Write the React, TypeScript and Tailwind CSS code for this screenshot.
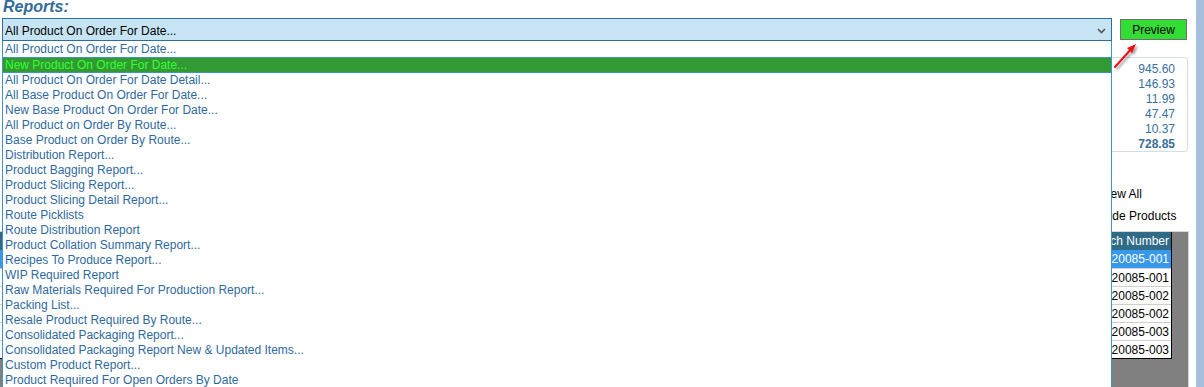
import React from 'react'

const reports = [
  'All Product On Order For Date...',
  'New Product On Order For Date...',
  'All Product On Order For Date Detail...',
  'All Base Product On Order For Date...',
  'New Base Product On Order For Date...',
  'All Product on Order By Route...',
  'Base Product on Order By Route...',
  'Distribution Report...',
  'Product Bagging Report...',
  'Product Slicing Report...',
  'Product Slicing Detail Report...',
  'Route Picklists',
  'Route Distribution Report',
  'Product Collation Summary Report...',
  'Recipes To Produce Report...',
  'WIP Required Report',
  'Raw Materials Required For Production Report...',
  'Packing List...',
  'Resale Product Required By Route...',
  'Consolidated Packaging Report...',
  'Consolidated Packaging Report New & Updated Items...',
  'Custom Product Report...',
  'Product Required For Open Orders By Date',
]

const totals = ['945.60', '146.93', '11.99', '47.47', '10.37']

const batches = ['20220085-001', '20220085-001', '20220085-002', '20220085-002', '20220085-003', '20220085-003']

function Chevron() {
  return (
    <svg width="9" height="6" viewBox="0 0 9 6" className="mr-[5px]">
      <path d="M1 1 L4.5 4.5 L8 1" fill="none" stroke="#555" strokeWidth="1.6" />
    </svg>
  )
}

function RedArrow() {
  return (
    <svg
      width="34"
      height="34"
      viewBox="0 0 34 34"
      className="absolute left-[1108px] top-[40px] drop-shadow-[2px_2px_1px_rgba(0,0,0,0.35)]"
    >
      <path d="M7 27 L24 8" stroke="#ee1111" strokeWidth="2" fill="none" strokeLinecap="round" />
      <path d="M28 4 L19 8 L24 13 Z" fill="#ee1111" />
    </svg>
  )
}

export default function App() {
  return (
    <div className="flex h-[387px] w-[1204px] overflow-hidden bg-white font-['Liberation_Sans',Arial,sans-serif] text-[12px]">
      <div className="relative w-[1196px]">
        {/* header */}
        <div className="h-[18px] pl-[3px] text-[16px] font-bold italic leading-[14px] text-[#336b99]">
          Reports:
        </div>
        <div className="flex h-[23px] items-start pl-[2px]">
          <div className="flex h-[23px] w-[1110px] items-center justify-between border border-[#2d6d9c] bg-[#c6e4f4] pl-[2px] pt-[2px] text-black">
            <span>All Product On Order For Date...</span>
            <Chevron />
          </div>
          <button
            type="button"
            className="ml-[8px] mt-[1px] h-[21px] w-[67px] border border-[#6f6f6f] bg-[#33dd33] pt-[1px] text-[12px] leading-[19px] text-black"
          >
            Preview
          </button>
        </div>

        {/* right side content under the list */}
        <div className="flex h-[190px] w-[1188px]">
          <div className="flex-1" />
          <div className="w-[101px] pt-[16px]">
            <div className="ml-[13px] h-[95px] rounded-[3px] border border-[#d3dde6] pr-[12px] pt-[4px] text-right leading-[15px] text-[#3a6f9c]">
              {totals.map((t, i) => (
                <div key={i}>{t}</div>
              ))}
              <div className="font-bold">728.85</div>
            </div>
            <div className="ml-[13px] mt-[35px] leading-[15px] text-black">View All</div>
            <div className="mt-[7px] leading-[15px] text-black">Include Products</div>
          </div>
        </div>

        {/* grid area */}
        <div className="h-[156px] w-[1189px] border-r border-t border-[#d8d8d8] bg-[#808080]">
          <div className="w-[1172px] border-b border-r border-black bg-white">
            <div className="flex h-[18px] items-center justify-end bg-[#2f6a86] pr-[2px] text-white">
              Batch Number
            </div>
            {batches.map((b, i) => (
              <div
                key={i}
                className={
                  i === 0
                    ? 'flex h-[18px] items-center justify-end bg-[#3898ea] pr-[2px] text-white'
                    : 'flex h-[18px] items-center justify-end border-t border-[#cfcfcf] pr-[2px] text-black'
                }
              >
                {b}
              </div>
            ))}
          </div>
        </div>

        {/* open dropdown list */}
        <div className="absolute left-[2px] top-[41px] bottom-0 w-[1110px] border-x border-[#3b95cc] bg-white pt-[1px]">
          {reports.map((r, i) =>
            i === 1 ? (
              <div
                key={r}
                className="h-[16px] border-y border-[#3b95cc] bg-[#339933] pl-[2px] leading-[14px] text-[#33ff33]"
              >
                {r}
              </div>
            ) : (
              <div key={r} className="h-[15px] pl-[2px] leading-[15px] text-[#2f6a9e]">
                {r}
              </div>
            ),
          )}
        </div>

        <RedArrow />
      </div>
      <div className="h-[387px] w-[8px] bg-[#a5bfdc]" />
    </div>
  )
}
